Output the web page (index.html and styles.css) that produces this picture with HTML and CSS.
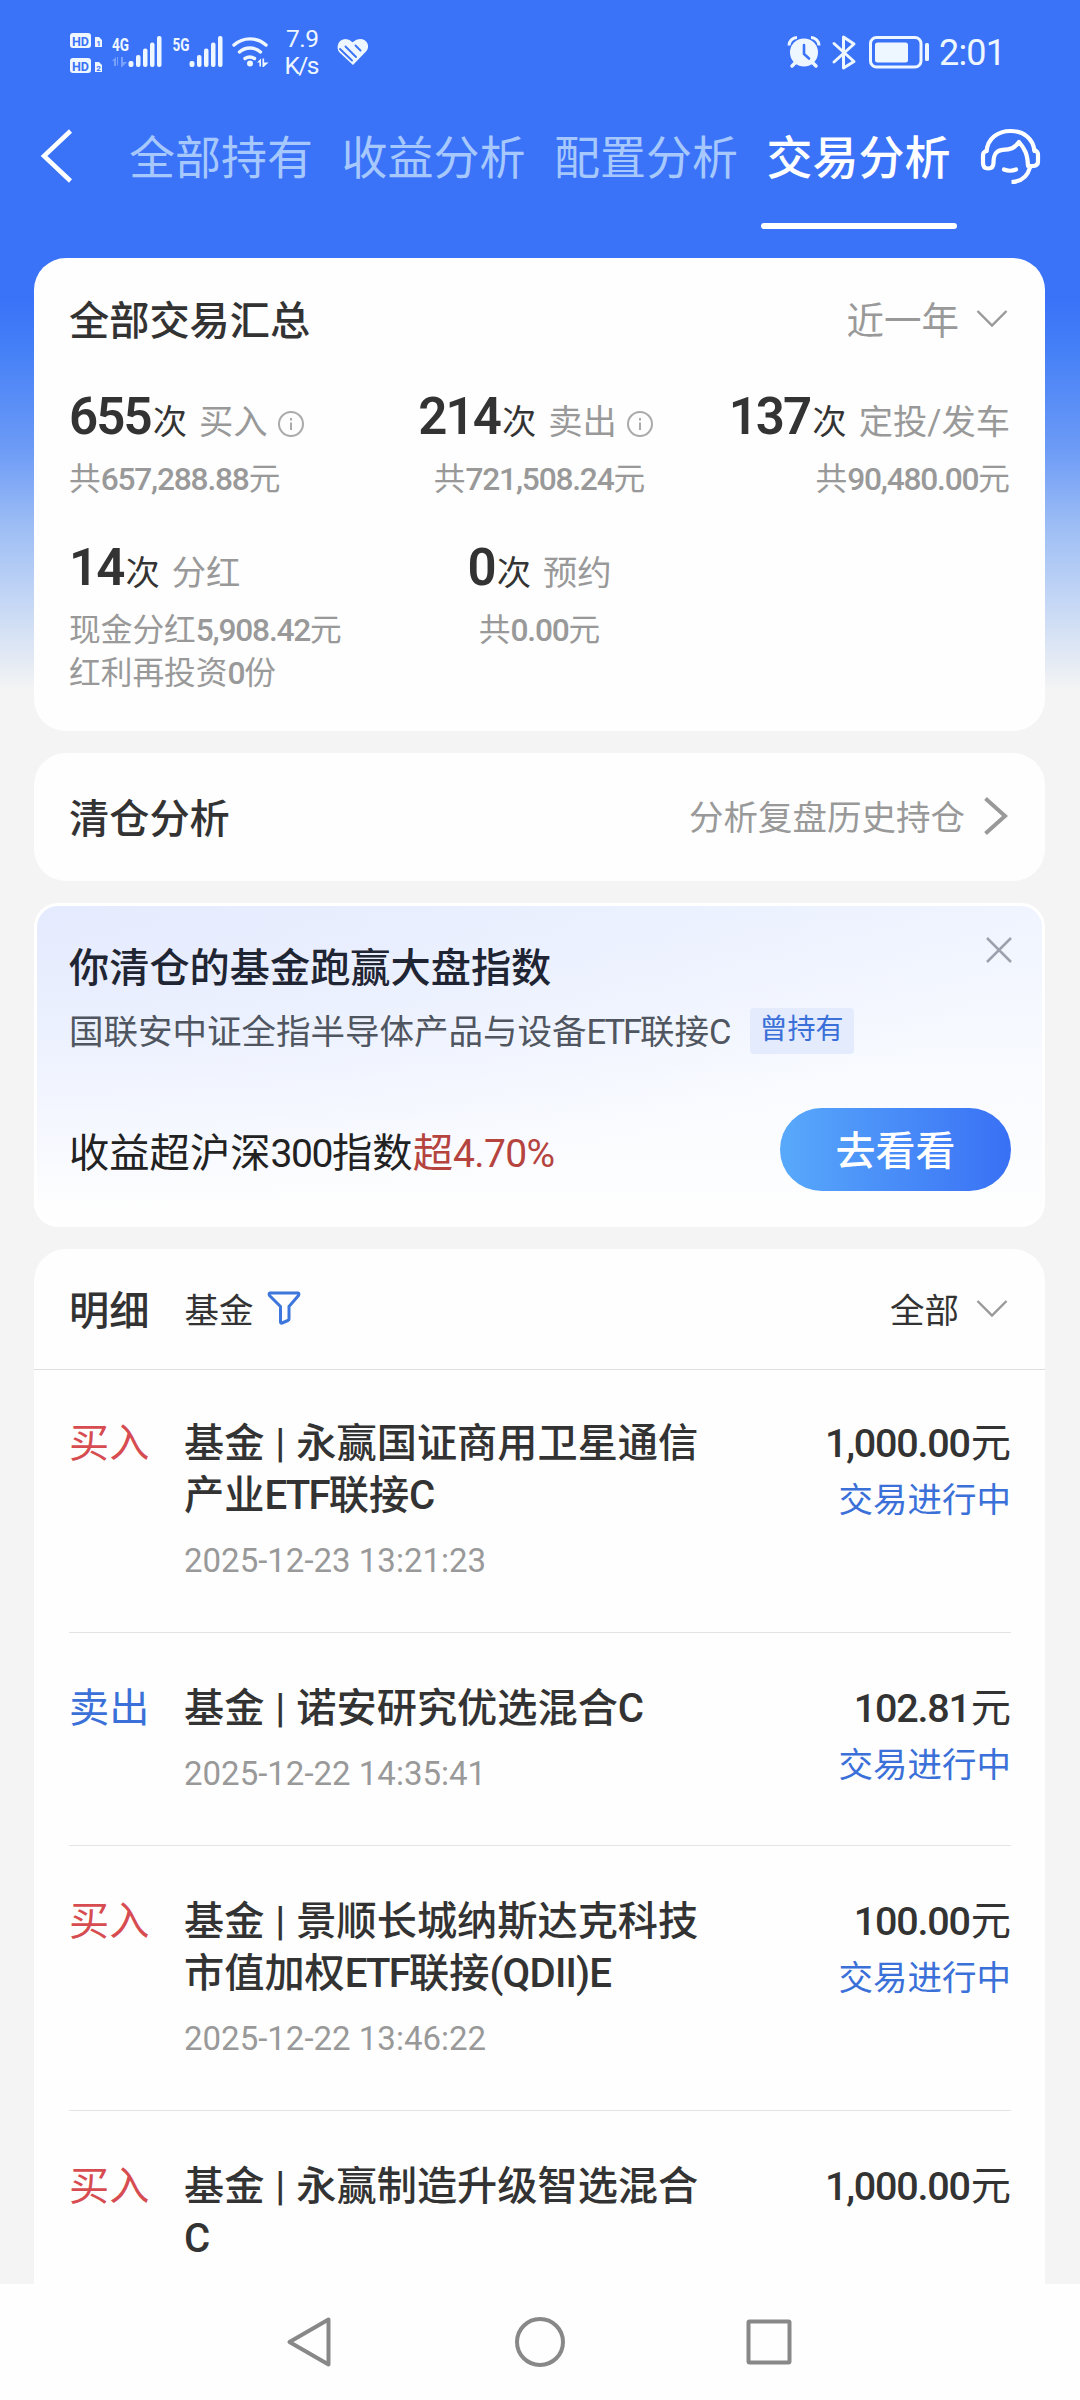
FILE: index.html
```html
<!DOCTYPE html>
<html lang="zh-CN">
<head>
<meta charset="utf-8">
<title>交易分析</title>
<link rel="stylesheet" href="styles.css">
</head>
<body>
<div class="screen">
  <div class="statusbar">
    <svg class="sb-left" width="310" height="60" viewBox="62 22 310 60" fill="#eef6ff">
      <rect x="70" y="33" width="21" height="15" rx="3"/>
      <rect x="70" y="58" width="21" height="15" rx="3"/>
      <g class="hd"><text x="72" y="45.500" textLength="17" lengthAdjust="spacingAndGlyphs">HD</text><text x="72" y="70.500" textLength="17" lengthAdjust="spacingAndGlyphs">HD</text></g>
      <path d="M95 37h4l3 3v7h-7zM95 62h4l3 3v7h-7z"/>
      <g class="sim"><text x="96.300" y="46">1</text><text x="96.300" y="71">2</text></g>
      <g class="net"><text x="112" y="50.500" textLength="17" lengthAdjust="spacingAndGlyphs">4G</text><text x="172.500" y="50.500" textLength="17" lengthAdjust="spacingAndGlyphs">5G</text></g>
      <path d="M112 61l4-4v9h-2v-5zM118 57v9l-1-1v-8zM121 57h2v5h4l-5 5h-1z" opacity=".35"/>
      <g id="bars"><rect x="128.500" y="61" width="5" height="6" rx="2"/><rect x="136" y="55" width="4.500" height="12" rx="2"/><rect x="143" y="48.500" width="4.500" height="18.500" rx="2"/><rect x="150" y="42.500" width="4.500" height="24.500" rx="2"/><rect x="157" y="36" width="4.500" height="31" rx="2"/></g>
      <use href="#bars" x="61"/>
      <g fill="none" stroke="#eef6ff" stroke-width="3.400" stroke-linecap="round"><path d="M234 45a24 24 0 0 1 32 0"/><path d="M239.500 52a16 16 0 0 1 21 0"/><path d="M245 58.500a8.500 8.500 0 0 1 9.500 0"/></g>
      <circle cx="250" cy="63.500" r="3"/>
      <path d="M257 62.500l4-4v8h-1.600v-4zM262.500 58.500h1.600v4h4.500l-5 4.500h-1.100z"/>
      <g class="rate"><text x="286" y="47" textLength="33" lengthAdjust="spacing">7.9</text><text x="284.500" y="73.500" textLength="35" lengthAdjust="spacing">K/s</text></g>
      <path d="M353 65L339.500 52.500C335.500 48 338 39 345.500 39q3.500 0 7 3.200q4-3.200 7.500-3.200c7.500 0 10.500 8 6 12.500z"/>
      <path d="M340 49l12 11.500M345.500 46.500l10.500 10.500M355.500 45.500l5 5" stroke="#3a73f8" stroke-width="1.900" fill="none" stroke-linecap="round"/>
    </svg>
    <svg class="sb-right" width="232" height="60" viewBox="780 22 232 60" fill="#eef6ff">
      <circle cx="804" cy="52.500" r="14"/>
      <path d="M789 45.500a8 8 0 0 1 8-8M811 37.500a8 8 0 0 1 8 8" stroke="#eef6ff" stroke-width="3" fill="none"/>
      <path d="M796 62l-4 4M812 62l4 4" stroke="#eef6ff" stroke-width="3.500" stroke-linecap="round" fill="none"/>
      <path d="M804 45v9l5 4.500" stroke="#3a73f8" stroke-width="2.600" fill="none" stroke-linecap="round"/>
      <path d="M834 43.500l20 18-10.500 6.500V37l10.500 7-20 18" stroke="#eef6ff" stroke-width="3" stroke-linejoin="round" stroke-linecap="round" fill="none"/>
      <rect x="870.500" y="37.500" width="50.500" height="29.500" rx="6" fill="none" stroke="#eef6ff" stroke-width="3"/>
      <rect x="875" y="42.500" width="33" height="20" rx="2.500"/>
      <rect x="925" y="43" width="4" height="18" rx="1.500"/>
      <text class="clock" x="939" y="65" textLength="67" lengthAdjust="spacing">2:01</text>
    </svg>
  </div>

  <nav class="tabs">
    <svg class="back" width="34" height="56" viewBox="0 0 34 56"><path d="M30.500 3L4 28l26.500 25" fill="none" stroke="#fff" stroke-width="4.500"/></svg>
    <div class="tab-list">
      <span>全部持有</span><span>收益分析</span><span>配置分析</span><span class="active">交易分析</span>
    </div>
    <svg class="service" width="62" height="60" viewBox="0 0 62 60" fill="none" stroke="#fff" stroke-width="4.200" stroke-linecap="round" stroke-linejoin="round">
      <path d="M6.500 23C8 10 18 3 30.500 3S53 10 54.500 23"/>
      <path d="M6.500 23Q3 24 3 27v8q0 5.500 5.200 5.500t5.300-5.500c0-8 2-12.500 9-13.200c8 0 12-1.500 16.500-7.800c6 7 8.500 12 9 24q5 .5 7.500-.5q2.500-1 2.500-4v-7q0-3-3.500-4.500"/>
      <path d="M50 39.500q-4 14-18.500 14.500" stroke-linecap="butt"/>
      <path d="M24 41.500q6 2.500 12 0"/>
    </svg>
  </nav>

  <main class="cards">
    <section class="card summary">
      <div class="row head"><h2>全部交易汇总</h2><span class="period">近一年<svg class="down" width="32" height="20" viewBox="0 0 32 20"><path d="M1.500 2L16 16.500 30.500 2"/></svg></span></div>
      <div class="stats">
        <div class="stat"><p class="count"><b>655</b><i>次</i><em>买入</em><svg class="info" viewBox="0 0 26 26"><circle cx="13" cy="13" r="12"/><path d="M13 11.500V19M13 7v2.500"/></svg></p><p class="sub">共<span class="n">657,288.88</span>元</p></div>
        <div class="stat mid"><p class="count"><b>214</b><i>次</i><em>卖出</em><svg class="info" viewBox="0 0 26 26"><circle cx="13" cy="13" r="12"/><path d="M13 11.500V19M13 7v2.500"/></svg></p><p class="sub">共<span class="n">721,508.24</span>元</p></div>
        <div class="stat end"><p class="count"><b>137</b><i>次</i><em>定投/发车</em></p><p class="sub">共<span class="n">90,480.00</span>元</p></div>
        <div class="stat"><p class="count"><b>14</b><i>次</i><em>分红</em></p><p class="sub">现金分红<span class="n">5,908.42</span>元<br>红利再投资<span class="n">0</span>份</p></div>
        <div class="stat mid"><p class="count"><b>0</b><i>次</i><em>预约</em></p><p class="sub">共<span class="n">0.00</span>元</p></div>
      </div>
    </section>

    <section class="card row clearance">
      <h2>清仓分析</h2>
      <span class="link">分析复盘历史持仓<svg width="26" height="38" viewBox="0 0 26 38"><path d="M2.500 1.500L22 19 2.500 36.500" fill="none" stroke="#999" stroke-width="4"/></svg></span>
    </section>

    <section class="card promo">
      <div class="row promo-head"><h2>你清仓的基金跑赢大盘指数</h2><svg class="close" width="28" height="28" viewBox="0 0 28 28"><path d="M2 2l24 24M26 2L2 26" stroke="#9da1ad" stroke-width="2.500"/></svg></div>
      <p class="fund">国联安中证全指半导体产品与设备<span class="n">ETF</span>联接<span class="n">C</span><span class="tag">曾持有</span></p>
      <div class="row promo-foot"><p>收益超沪深<span class="n idx">300</span>指数<span class="up">超<span class="n">4.70%</span></span></p><button>去看看</button></div>
    </section>

    <section class="card detail">
      <div class="row detail-head">
        <h2>明细</h2><span class="kind">基金</span>
        <svg class="filter" width="36" height="36" viewBox="0 0 36 36"><path d="M4 3h28q1.500.5.500 2.500L23 16.500v12.500q0 1-1 1.500l-6 2.500q-1.500.5-1.500-1V16.500L3.500 5.500Q2.500 3.500 4 3z" fill="none" stroke="#3d76dc" stroke-width="3" stroke-linejoin="round"/></svg>
        <span class="all">全部<svg class="down" width="32" height="20" viewBox="0 0 32 20"><path d="M1.500 2L16 16.500 30.500 2"/></svg></span>
      </div>
      <ul>
        <li><span class="buy">买入</span><div class="name"><h3>基金 | 永赢国证商用卫星通信<br>产业<span class="n">ETF</span>联接<span class="n">C</span></h3><time>2025-12-23 13:21:23</time></div><div class="amount"><p><span class="n">1,000.00</span>元</p><span>交易进行中</span></div></li>
        <li><span class="sell">卖出</span><div class="name"><h3>基金 | 诺安研究优选混合<span class="n">C</span></h3><time>2025-12-22 14:35:41</time></div><div class="amount"><p><span class="n">102.81</span>元</p><span>交易进行中</span></div></li>
        <li><span class="buy">买入</span><div class="name"><h3>基金 | 景顺长城纳斯达克科技<br>市值加权<span class="n">ETF</span>联接<span class="n qd">(QDII)E</span></h3><time>2025-12-22 13:46:22</time></div><div class="amount"><p><span class="n">100.00</span>元</p><span>交易进行中</span></div></li>
        <li><span class="buy">买入</span><div class="name"><h3>基金 | 永赢制造升级智选混合<br><span class="n">C</span></h3></div><div class="amount"><p><span class="n">1,000.00</span>元</p></div></li>
      </ul>
    </section>
  </main>

  <footer class="sysnav">
    <svg width="52" height="56" viewBox="0 0 52 56"><path d="M43.500 5.500v45L4.500 28z"/></svg>
    <svg width="52" height="56" viewBox="0 0 52 56"><circle cx="26" cy="28" r="23"/></svg>
    <svg width="52" height="56" viewBox="0 0 52 56"><rect x="5.500" y="7.500" width="41" height="41" rx="1"/></svg>
  </footer>
</div>
</body>
</html>
```
FILE: styles.css
```css
* { box-sizing: border-box; margin: 0; padding: 0; }
body { width: 1080px; background: #fff; font-family: Roboto, "Noto Sans CJK SC", sans-serif; color: #333; }
svg { flex: none; }
i, em { font-style: normal; }
ul { list-style: none; }
h2, h3 { font-size: 40.2px; font-weight: 500; white-space: nowrap; }
.row { display: flex; align-items: center; justify-content: space-between; }

.screen {
  width: 1080px; height: 2400px; overflow: hidden;
  display: flex; flex-direction: column;
  background: linear-gradient(180deg, #3a73f8 0, #3a73f8 300px, #4580f7 350px, #6d9bf6 450px, #9cbdf5 525px, #c6d8f5 605px, #f4f4f4 690px);
}

/* status bar */
.statusbar { height: 100px; padding: 22px 68px 0 62px; display: flex; justify-content: space-between; flex: none; }
.hd { font: 700 13px Roboto, sans-serif; fill: #3a73f8; }
.sim { font: 700 8px Roboto, sans-serif; fill: #3a73f8; }
.net { font: 700 19px Roboto, sans-serif; }
.rate { font: 400 24.5px Roboto, sans-serif; }
.clock { font: 400 36px Roboto, sans-serif; }

/* top tabs */
.tabs { height: 158px; flex: none; display: flex; align-items: flex-start; padding: 28px 38px 0 40px; }
.tab-list { display: flex; gap: 28.5px; margin-left: 55px; font-size: 46px; line-height: 60px; color: #a6c8fd; }
.tab-list span { white-space: nowrap; }
.tab-list .active { color: #fff; font-weight: 500; display: flex; flex-direction: column; align-items: center; }
.tab-list .active::after { content: ""; width: 196px; height: 6px; border-radius: 3px; background: #fff; margin: 35px -6px 0; }
.service { margin-left: auto; }

/* cards */
.cards { flex: 1; min-height: 0; overflow: hidden; padding: 0 35px 0 34px; display: flex; flex-direction: column; gap: 22px; }
.card { background: #fefefe; border-radius: 32px; padding: 0 35px; flex: none; }

.summary { height: 472.5px; padding-top: 29px; }
.head { height: 60px; }
.period { font-size: 37.5px; color: #999; display: flex; align-items: center; gap: 17px; margin-right: 2px; }
.down { margin-top: 3px; }
.down path { fill: none; stroke: #999; stroke-width: 2.4; }
.stats { display: grid; grid-template-columns: 1fr auto 1fr; row-gap: 37px; margin-top: 40px; }
.stat.mid { text-align: center; }
.stat.end { text-align: right; }
.count { font-size: 51px; line-height: 60px; height: 60px; white-space: nowrap; }
.count b { font-weight: 600; letter-spacing: -1.9px; }
.count i, .count em { font-size: 34.3px; line-height: 1; }
.count i { margin-left: 2px; }
.count em { color: #999; margin-left: 12px; }
.info { width: 26px; height: 26px; margin: 0 0 -3px 10px; fill: none; stroke: #aaa; stroke-width: 2; }
.stat.mid .info { margin-right: 8px; }
.sub { font-size: 31.7px; line-height: 43px; color: #999; margin-top: 11px; white-space: nowrap; }
.sub .n { font-weight: 500; letter-spacing: -1.2px; }

.clearance { height: 128px; padding-bottom: 3px; }
.link { font-size: 34.5px; color: #999; display: flex; align-items: center; gap: 18px; margin-right: 1px; }
.link svg { margin-top: 2px; }

.promo { height: 324px; border: 3px solid #fff; border-radius: 24px; padding: 29px 31px 0 32px; display: flex; flex-direction: column;
  background: radial-gradient(ellipse 1000px 300px at 0 0, #e5ebfe 0, rgba(229,235,254,0) 100%), linear-gradient(180deg, #eff4ff 0, #f9fbff 55%, #fefefe 100%); }
.promo h2 { color: #1f2533; }
.promo-head { height: 60px; }
.close { margin: -30px -2px 0 0; }
.fund { margin-top: 12px; height: 50px; font-size: 34.5px; line-height: 50px; color: #50565f; display: flex; white-space: nowrap; }
.fund .n { letter-spacing: -2px; }
.tag { width: 104px; height: 46px; margin: 1px 0 0 20px; background: #e3ebfd; border-radius: 4px; font-size: 28px; line-height: 43px; text-align: center; color: #3a70d8; }
.promo-foot { margin-top: 51px; height: 83px; font-size: 40.3px; color: #222; }
.promo-foot .n { font-size: 39px; letter-spacing: -.6px; }
.promo-foot .idx { letter-spacing: -1.4px; }
.up { color: #b5443f; }
.promo-foot button { width: 231px; height: 83px; border: 0; border-radius: 42px; padding-bottom: 3px; font: 500 40px Roboto, "Noto Sans CJK SC", sans-serif; color: #fff; background: linear-gradient(90deg, #58a9fb, #3970f5); }

/* transaction list */
.detail { padding: 0; height: 1100px; }
.detail-head { height: 121px; padding: 0 37px 2px 35px; border-bottom: 1.5px solid #dedede; }
.kind { font-size: 34.5px; margin-left: 35px; }
.filter { margin-left: 13px; }
.all { margin-left: auto; font-size: 34.5px; display: flex; align-items: center; gap: 17px; }
li { margin: 0 34px 0 35px; padding: 50px 0 51px; border-bottom: 1.5px solid #e4e4e4; display: flex; align-items: flex-start; }
li:first-child { padding-top: 48px; }
li > span { font-size: 40.2px; line-height: 52px; width: 115px; }
.buy { color: #d64c50; }
.sell { color: #3a70d8; }
h3 { line-height: 52px; word-spacing: 1px; }
h3 .n { letter-spacing: -1.8px; }
h3 .qd { letter-spacing: -.8px; }
time { display: block; margin-top: 19px; font-size: 33px; line-height: 40px; color: #999; }
.amount { margin-left: auto; text-align: right; }
.amount p { font-size: 40.2px; line-height: 52px; }
.amount .n { font-size: 39.5px; font-weight: 500; letter-spacing: -1.2px; margin-right: 1px; }
.amount > span { display: block; margin-top: 5px; font-size: 34.5px; line-height: 50px; color: #3a70d8; }

/* system navigation */
.sysnav { height: 116px; flex: none; background: #fefefe; display: flex; justify-content: center; gap: 177px; padding-top: 30px; }
.sysnav svg { fill: none; stroke: #888; stroke-width: 4; stroke-linejoin: round; }
```
